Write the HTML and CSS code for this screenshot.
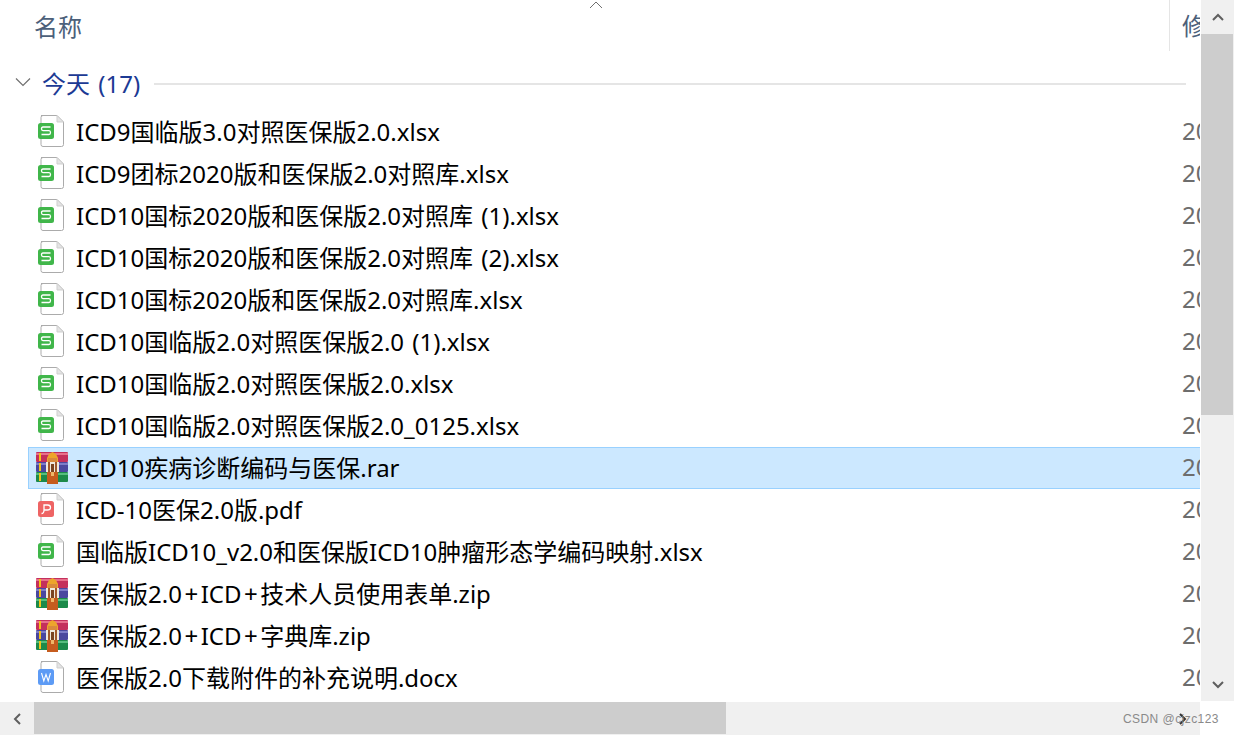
FILE: index.html
```html
<!DOCTYPE html>
<html lang="zh-CN">
<head>
    <meta charset="UTF-8">
    <title>今天 (17)</title>
    <link rel="stylesheet" href="styles.css">
</head>
<body>

<svg class="defs" width="0" height="0">
    <symbol id="page" viewBox="0 0 36 36">
        <path d="M5 1.500H21L27.500 8V30.500Q27.500 32.500 25.500 32.500H7Q5 32.500 5 30.500V3.500Q5 1.500 7 1.500Z" fill="#fff" stroke="#ababab"/>
        <path d="M21 1.500V8H27.500Z" fill="#e4e4e4" stroke="#cfcfcf"/>
    </symbol>
    <symbol id="icon-xlsx" viewBox="0 0 36 36">
        <use href="#page"/>
        <rect x="2" y="9" width="16" height="16" rx="2.500" fill="#40b64a"/>
        <path d="M14.500 13H7Q5.500 13 5.500 14.800T7 16.700H13Q14.500 16.700 14.500 18.600T13 20.500H5.500" fill="none" stroke="#fff" stroke-width="1.300"/>
    </symbol>
    <symbol id="icon-pdf" viewBox="0 0 36 36">
        <use href="#page"/>
        <rect x="2" y="9" width="16" height="16" rx="2.500" fill="#ee6464"/>
        <path d="M5.500 21.500Q8 21.500 8 18V13H11.500Q14.500 13 14.500 15.500T11.500 18H8" fill="none" stroke="#fff" stroke-width="1.300"/>
    </symbol>
    <symbol id="icon-docx" viewBox="0 0 36 36">
        <use href="#page"/>
        <rect x="2" y="9" width="16" height="16" rx="2.500" fill="#5d9bf5"/>
        <path d="M5.500 13L7.800 21L10 14.500L12.200 21L14.500 13" fill="none" stroke="#fff" stroke-width="1.100"/>
    </symbol>
    <symbol id="icon-rar" viewBox="0 0 32 32">
        <rect x="0" y="0" width="32" height="10" rx="1" fill="#c4305c"/>
        <rect x="0" y="10" width="32" height="10" rx="1" fill="#4a479f"/>
        <rect x="0" y="20" width="32" height="10" rx="1" fill="#1c8a4a"/>
        <rect x="0" y="1" width="32" height="2" fill="#e8708c"/>
        <rect x="0" y="11" width="32" height="2" fill="#7d7cc8"/>
        <rect x="0" y="21" width="32" height="2" fill="#56bd7e"/>
        <rect x="3" y="1" width="2" height="8" fill="#f2c21a"/>
        <rect x="3" y="11" width="2" height="8" fill="#f2c21a"/>
        <rect x="3" y="21" width="2" height="8" fill="#f2c21a"/>
        <path d="M11 6L13 2L16.500 0L20 2L22 6V10H11Z" fill="#eda52c"/>
        <rect x="12" y="6" width="9" height="4" fill="#d98a3c"/>
        <rect x="10" y="10" width="13" height="10" fill="#efe9dc"/>
        <rect x="12" y="10" width="2" height="10" fill="#a0592a"/>
        <rect x="19" y="10" width="2" height="10" fill="#a0592a"/>
        <rect x="15" y="12" width="3" height="8" fill="#7a4420"/>
        <rect x="11" y="20" width="11" height="12" fill="#c65c1e"/>
        <rect x="15" y="20" width="3" height="4" fill="#efb768"/>
    </symbol>
</svg>

<div class="window">
    <div class="pane">
        <div class="explorer">
            <!-- 表头 -->
            <div class="head">
                <span class="head-name">名称</span>
                <svg class="sort-arrow" width="16" height="9" viewBox="0 0 16 9"><path d="M2 8L8 2L14 8" fill="none" stroke="#6f6f6f" stroke-width="1"/></svg>
                <span class="head-date">修改日期</span>
            </div>

            <!-- 分组 -->
            <div class="group">
                <svg class="group-chevron" width="16" height="10" viewBox="0 0 16 10"><path d="M1 1.500L8 8.500L15 1.500" fill="none" stroke="#707070" stroke-width="1.200"/></svg>
                <span class="group-title">今天 (17)</span>
                <span class="group-line"></span>
            </div>

            <div class="list">
                <div class="row"><svg class="file-icon"><use href="#icon-xlsx"/></svg><span class="name">ICD9国临版3.0对照医保版2.0.xlsx</span><span class="date">2023/1/30</span></div>
                <div class="row"><svg class="file-icon"><use href="#icon-xlsx"/></svg><span class="name">ICD9团标2020版和医保版2.0对照库.xlsx</span><span class="date">2023/1/30</span></div>
                <div class="row"><svg class="file-icon"><use href="#icon-xlsx"/></svg><span class="name">ICD10国标2020版和医保版2.0对照库 (1).xlsx</span><span class="date">2023/1/30</span></div>
                <div class="row"><svg class="file-icon"><use href="#icon-xlsx"/></svg><span class="name">ICD10国标2020版和医保版2.0对照库 (2).xlsx</span><span class="date">2023/1/30</span></div>
                <div class="row"><svg class="file-icon"><use href="#icon-xlsx"/></svg><span class="name">ICD10国标2020版和医保版2.0对照库.xlsx</span><span class="date">2023/1/30</span></div>
                <div class="row"><svg class="file-icon"><use href="#icon-xlsx"/></svg><span class="name">ICD10国临版2.0对照医保版2.0 (1).xlsx</span><span class="date">2023/1/30</span></div>
                <div class="row"><svg class="file-icon"><use href="#icon-xlsx"/></svg><span class="name">ICD10国临版2.0对照医保版2.0.xlsx</span><span class="date">2023/1/30</span></div>
                <div class="row"><svg class="file-icon"><use href="#icon-xlsx"/></svg><span class="name">ICD10国临版2.0对照医保版2.0_0125.xlsx</span><span class="date">2023/1/30</span></div>
                <div class="row selected"><svg class="file-icon rar"><use href="#icon-rar"/></svg><span class="name">ICD10疾病诊断编码与医保.rar</span><span class="date">2023/1/30</span></div>
                <div class="row"><svg class="file-icon"><use href="#icon-pdf"/></svg><span class="name">ICD-10医保2.0版.pdf</span><span class="date">2023/1/30</span></div>
                <div class="row"><svg class="file-icon"><use href="#icon-xlsx"/></svg><span class="name">国临版ICD10_v2.0和医保版ICD10肿瘤形态学编码映射.xlsx</span><span class="date">2023/1/30</span></div>
                <div class="row"><svg class="file-icon rar"><use href="#icon-rar"/></svg><span class="name">医保版2.0<span class="plus">+</span>ICD<span class="plus">+</span>技术人员使用表单.zip</span><span class="date">2023/1/30</span></div>
                <div class="row"><svg class="file-icon rar"><use href="#icon-rar"/></svg><span class="name">医保版2.0<span class="plus">+</span>ICD<span class="plus">+</span>字典库.zip</span><span class="date">2023/1/30</span></div>
                <div class="row"><svg class="file-icon"><use href="#icon-docx"/></svg><span class="name">医保版2.0下载附件的补充说明.docx</span><span class="date">2023/1/30</span></div>
            </div>
        </div>

        <!-- 垂直滚动条 -->
        <div class="vscroll">
            <div class="vscroll-btn"><svg width="12" height="8" viewBox="0 0 12 8"><path d="M1 7L6 2L11 7" fill="none" stroke="#5f5f5f" stroke-width="2"/></svg></div>
            <div class="vscroll-thumb"></div>
            <div class="vscroll-rest"><svg width="12" height="8" viewBox="0 0 12 8"><path d="M1 1L6 6L11 1" fill="none" stroke="#5f5f5f" stroke-width="2"/></svg></div>
        </div>
    </div>

    <!-- 水平滚动条 -->
    <div class="hscroll">
        <div class="hscroll-track">
            <div class="hscroll-btn"><svg width="8" height="12" viewBox="0 0 8 12"><path d="M7 1L2 6L7 11" fill="none" stroke="#5f5f5f" stroke-width="2"/></svg></div>
            <div class="hscroll-thumb"></div>
            <div class="hscroll-rest"><svg width="8" height="12" viewBox="0 0 8 12"><path d="M1 1L6 6L1 11" fill="none" stroke="#333" stroke-width="2"/></svg></div>
        </div>
        <div class="corner"></div>
    </div>

    <span class="watermark">CSDN @cjzc123</span>
</div>

</body>
</html>
```

FILE: styles.css
```css
* {
    box-sizing: border-box;
}
html, body {
    margin: 0;
    padding: 0;
    background-color: #fff;
    overflow: hidden;
}
body {
    font-family: "Noto Sans", "Noto Sans CJK SC", sans-serif;
    font-size: 24px;
    color: #000;
}
.defs {
    display: block;
    height: 0;
}
.window {
    position: relative;
    width: 1234px;
    height: 735px;
    display: flex;
    flex-direction: column;
}
.pane {
    display: flex;
    height: 702px;
}
.explorer {
    flex: none;
    width: 1200px;
    overflow: hidden;
    white-space: nowrap;
}
.head {
    position: relative;
    height: 51px;
    display: flex;
    align-items: center;
    padding-left: 34px;
    color: #4c607a;
}
.head-name {
    flex: 0 0 1135px;
}
.head-date {
    border-left: 1px solid #e5e5e5;
    height: 51px;
    line-height: 52px;
    padding-left: 12px;
}
.sort-arrow {
    position: absolute;
    left: 588px;
    top: 0;
}
.group {
    height: 60px;
    display: flex;
    align-items: center;
    padding: 2px 14px 0 15px;
}
.group-chevron {
    flex: none;
    margin-right: 11px;
}
.group-title {
    color: #1c3a94;
    margin-right: 14px;
    word-spacing: 2px;
}
.group-line {
    flex: 1;
    height: 2px;
    margin-top: 3px;
    background-color: #e5e5e5;
}
.list {
    padding-left: 28px;
}
.row {
    height: 42px;
    display: flex;
    align-items: center;
    border: 1px solid transparent;
    border-right: none;
}
.row.selected {
    background-color: #cce8ff;
    border-color: #99d1ff;
}
.file-icon {
    flex: none;
    width: 36px;
    height: 36px;
    margin: 0 4px 0 7px;
}
.file-icon.rar {
    width: 32px;
    height: 32px;
    margin-right: 8px;
}
.name {
    flex: 0 0 1106px;
    position: relative;
    top: -2px;
    word-spacing: 2px;
}
.date {
    position: relative;
    top: -2px;
    color: #6d6d6d;
}
.plus {
    letter-spacing: 2.5px;
    padding-left: 2.500px;
}
.vscroll {
    flex: none;
    width: 33px;
    margin-left: 1px;
    background-color: #f0f0f0;
    display: flex;
    flex-direction: column;
    align-items: center;
    height: 701px;
}
.vscroll-btn {
    height: 34px;
    width: 100%;
    display: flex;
    align-items: center;
    justify-content: center;
}
.vscroll-thumb {
    width: 32px;
    height: 381px;
    align-self: flex-start;
    background-color: #cdcdcd;
}
.vscroll-rest {
    flex: 1;
    width: 100%;
    display: flex;
    align-items: flex-end;
    justify-content: center;
    padding-bottom: 12px;
}
.hscroll {
    display: flex;
    flex: 1;
}
.hscroll-track {
    width: 1200px;
    display: flex;
    background-color: #f0f0f0;
}
.hscroll-btn {
    width: 34px;
    display: flex;
    align-items: center;
    justify-content: center;
}
.hscroll-thumb {
    width: 692px;
    height: 32px;
    background-color: #cdcdcd;
}
.hscroll-rest {
    flex: 1;
    display: flex;
    align-items: center;
    justify-content: flex-end;
    padding-right: 13px;
}
.corner {
    flex: 1;
    background-color: #fff;
}
.watermark {
    position: absolute;
    right: 15px;
    bottom: 9px;
    font-family: "Liberation Sans", sans-serif;
    font-size: 12px;
    letter-spacing: 0.45px;
    color: #8a8a8a;
}
```
